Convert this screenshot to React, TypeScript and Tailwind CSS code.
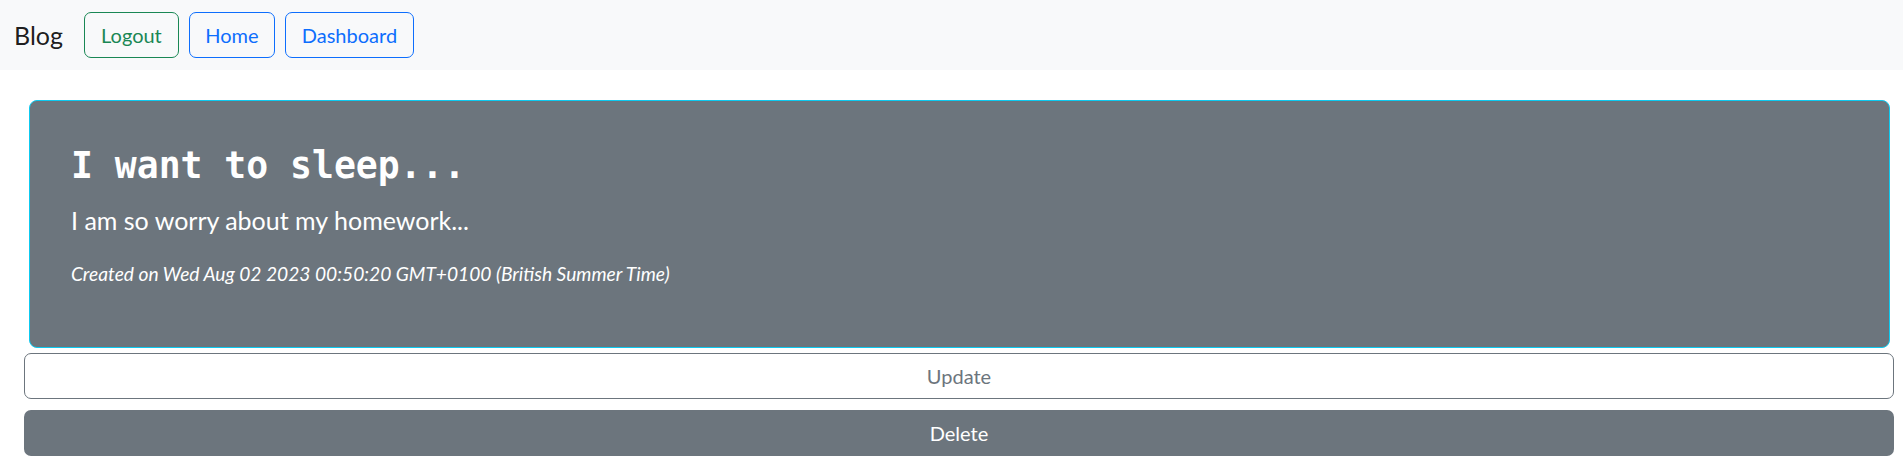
import React from "react";

export default function App() {
  const sans = "font-['Lato','Noto_Sans',sans-serif]";
  return (
    <div className={`min-h-[470px] bg-white ${sans}`}>
      <nav className="h-[70px] bg-[#f8f9fa] flex items-center pl-[14px]">
        <span className="text-[25px] leading-none text-[rgba(0,0,0,0.9)] mr-[21px]">Blog</span>
        <div className="flex gap-[10px]">
          <button className="h-[46px] w-[95px] rounded-[7px] border border-[#198754] text-[#198754] text-[20px]">
            Logout
          </button>
          <button className="h-[46px] w-[86px] rounded-[7px] border border-[#0d6efd] text-[#0d6efd] text-[20px]">
            Home
          </button>
          <button className="h-[46px] w-[129px] rounded-[7px] border border-[#0d6efd] text-[#0d6efd] text-[20px]">
            Dashboard
          </button>
        </div>
      </nav>
      <div className="flex flex-col pl-[24px] pt-[30px]">
        <div className="ml-[5px] w-[1861px] h-[248px] rounded-[8px] border border-[#0dcaf0] bg-[#6c757d] pl-[41px] pt-[43px] text-white">
          <h2 className="font-['DejaVu_Sans_Mono',monospace] font-bold text-[36.4px] leading-[44px]">
            I want to sleep...
          </h2>
          <p className="mt-[14px] text-[25px] leading-[36px]">I am so worry about my homework...</p>
          <p className="mt-[21px] italic text-[19.2px] leading-[29px]">
            Created on Wed Aug 02 2023 00:50:20 GMT+0100 (British Summer Time)
          </p>
        </div>
        <button className="mt-[5px] w-[1870px] h-[46px] rounded-[7px] border border-[#6c757d] bg-white text-[#6c757d] text-[20px]">
          Update
        </button>
        <button className="mt-[11px] w-[1870px] h-[46px] rounded-[7px] bg-[#6c757d] text-white text-[20px]">
          Delete
        </button>
      </div>
    </div>
  );
}
